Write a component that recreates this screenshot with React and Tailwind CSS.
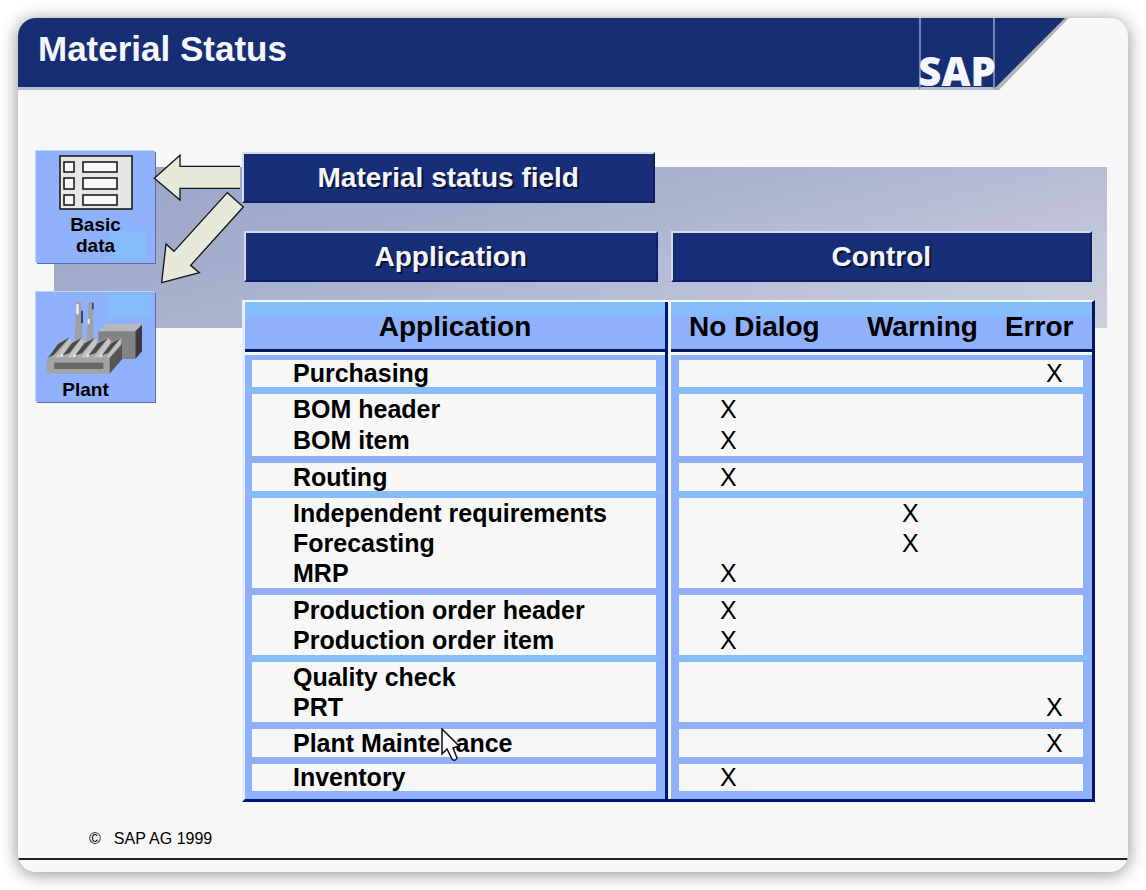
import React from 'react';

const groups = [
  { line: 'leading-[27px]', items: [{ name: 'Purchasing', mark: 'error' }] },
  {
    line: 'leading-[31px]',
    stripe: true,
    items: [{ name: 'BOM header', mark: 'noDialog' }, { name: 'BOM item', mark: 'noDialog' }],
  },
  { line: 'leading-[28px]', items: [{ name: 'Routing', mark: 'noDialog' }] },
  {
    line: 'leading-[30px]',
    stripe: true,
    items: [
      { name: 'Independent requirements', mark: 'warning' },
      { name: 'Forecasting', mark: 'warning' },
      { name: 'MRP', mark: 'noDialog' },
    ],
  },
  {
    line: 'leading-[30px]',
    items: [
      { name: 'Production order header', mark: 'noDialog' },
      { name: 'Production order item', mark: 'noDialog' },
    ],
  },
  { line: 'leading-[30px]', stripe: true, items: [{ name: 'Quality check', mark: null }, { name: 'PRT', mark: 'error' }] },
  { line: 'leading-[28px]', items: [{ name: 'Plant Maintenance', mark: 'error', pointer: true }] },
  { line: 'leading-[27px]', items: [{ name: 'Inventory', mark: 'noDialog' }] },
];

const headCell =
  'p-0 h-[53px] pb-1 text-[28px] leading-8 font-bold whitespace-nowrap bg-[linear-gradient(to_top,#eef6fd_3px,#06165c_3px,#06165c_6px,#8fb0fb_6px,#8fb0fb_calc(100%-14px),#84bdf9_calc(100%-14px))]';

const SlideHeader = () => (
  <header className="flex h-[72px]">
    <div className="flex flex-1 items-start bg-[#182e72] border-b-3 border-[#b9bfd3] pl-5 pt-3">
      <h1 className="text-[35px] leading-[38px] font-bold text-[#f4f6fc] whitespace-nowrap">Material Status</h1>
    </div>
    <div className="flex w-[76px] items-end justify-center bg-[#182e72] border-x-2 border-x-[#7482b6] border-b-3 border-b-[#b9bfd3]">
      <span className="h-[34px] font-['Open_Sans',sans-serif] text-[40px] leading-9 font-extrabold text-[#f4f6fc]">SAP</span>
    </div>
    <svg className="mr-[59px] h-[72px] w-[74px] shrink-0" viewBox="0 0 74 72" aria-hidden="true">
      <path d="M0 72 L4 72 L74 0 H60 L0 66 Z" fill="#b4b5b9" />
      <path d="M0 0 H70 L1 69 H0 Z" fill="#182e72" />
    </svg>
  </header>
);

const BasicDataTile = () => (
  <div className="flex h-[112px] flex-col items-center bg-[#8fb0fb] bg-[linear-gradient(#84bdf9,#84bdf9)] bg-[length:36px_28px] bg-[position:74px_80px] bg-no-repeat pt-1 shadow-[1px_1px_0_#5d6f9f,-1px_-1px_0_#b8d4fb]">
    <svg className="h-[55px] w-[74px]" viewBox="0 0 74 55" stroke="#111" strokeWidth="1.5" aria-hidden="true">
      <rect x="1" y="1" width="72" height="53" fill="#e6e6e6" />
      <g fill="#f8f8f8">
        <rect x="5" y="7" width="10" height="10" />
        <rect x="24" y="7" width="34" height="10" />
        <rect x="5" y="23" width="10" height="11" />
        <rect x="24" y="23" width="34" height="11" />
        <rect x="5" y="40" width="10" height="10" />
        <rect x="24" y="40" width="34" height="10" />
      </g>
    </svg>
    <p className="mt-1 text-center text-[19px] leading-[21px] font-bold">
      Basic
      <br />
      data
    </p>
  </div>
);

const PlantTile = () => (
  <div className="flex h-[110px] flex-col items-center bg-[#8fb0fb] bg-[linear-gradient(#84bdf9,#84bdf9)] bg-[length:44px_24px] bg-[position:71px_2px] bg-no-repeat pt-2 pr-1 shadow-[1px_1px_0_#5d6f9f,-1px_-1px_0_#b8d4fb]">
    <svg className="h-[75px] w-[100px]" viewBox="70 90 300 225" aria-hidden="true">
      {/* block behind */}
      <path d="M233 184 L257 162 H364 L344 184 Z" fill="#b9b9b9" />
      <path d="M233 184 H344 V267 H233 Z" fill="#838383" />
      <path d="M344 184 L364 164 V244 L344 267 Z" fill="#3c3c3f" />
      {/* chimneys */}
      <path d="M166 96 H181 L186 215 H162 Z" fill="#a0a0a4" />
      <path d="M204 96 H218 V215 H198 Z" fill="#a0a0a4" />
      <path d="M167 103 h7 v30 h-7z M201 147 h6 v14 h-6z" fill="#f2f2f2" />
      <path d="M181 122 h6 v38 h-6z M214 98 h5 v20 h-5z" fill="#35407a" />
      {/* saw-tooth roof */}
      <path d="M84 264 L146 202 L152 218 L182 204 L190 218 L222 204 L230 218 L262 202 L270 218 L302 202 V264 Z" fill="#a9a9a9" />
      <path d="M104 262 L147 204 L152 214 L124 262 Z M142 262 L182 206 L192 212 L162 262 Z M182 262 L222 206 L232 212 L202 262 Z M222 262 L262 206 L272 212 L242 262 Z M258 262 L300 206 V222 L266 262 Z" fill="#c4c4c4" />
      <path d="M82 264 L112 222 L147 202 L100 254 Z M126 256 L154 220 L182 204 L146 250 Z M164 256 L192 220 L222 204 L184 250 Z M204 256 L232 220 L262 204 L224 250 Z M244 256 L272 220 L300 204 L262 250 Z" fill="#4a4a4e" />
      <path d="M120 262 l3 -12 l5 8z M158 262 l3 -12 l5 8z M198 262 l3 -12 l5 8z M238 262 l3 -12 l5 8z" fill="#f2f2f2" />
      {/* front */}
      <path d="M78 264 H267 V311 H78 Z" fill="#a3a3a3" />
      <path d="M267 264 L304 222 V268 L267 311 Z" fill="#555558" />
      <rect x="101" y="278" width="147" height="19" fill="#686868" />
    </svg>
    <p className="mt-1 mr-4 text-[19px] leading-[21px] font-bold">Plant</p>
  </div>
);

const Arrows = () => (
  <svg
    className="relative h-[132px] w-[87px] shrink-0 overflow-visible"
    viewBox="405 33 261 396"
    fill="#e8e9d8"
    stroke="#15151a"
    strokeWidth="4"
    aria-hidden="true"
  >
    <path d="M660 79 H480 V46 L403 115 L480 180 V145 H660" />
    <path d="M425 428 L438 312 L462 334 L622 158 L670 201 L512 376 L538 398 Z" />
  </svg>
);

const Bar = ({ className, children }) => (
  <h2
    className={`border-2 border-t-[#d5dbea] border-l-[#d5dbea] border-r-[#0f2062] border-b-[#0f2062] bg-[#182e78] text-center text-[28px] leading-[47px] font-bold text-[#f4f6fc] [text-shadow:2px_2px_0_#0c1230] ${className}`}
  >
    {children}
  </h2>
);

const Pointer = () => (
  <svg className="absolute -top-px left-[189px] z-10 h-[34px] w-[20px]" viewBox="0 0 20 34" aria-hidden="true">
    <path
      d="M1 1 V26 L6 21 L11 31 Q14 34 16 30 L12 20 L18 18 Z"
      fill="#f7f7f7"
      stroke="#111"
      strokeWidth="1.5"
    />
  </svg>
);

const StatusTable = () => (
  <div className="border-t-2 border-l-3 border-r-3 border-b-3 border-t-[#eef6fd] border-l-[#e4f0fd] border-r-[#06165c] border-b-[#00147c]">
    <table className="w-full table-fixed border-separate border-spacing-0 text-left text-[25px] text-black">
      <colgroup>
        <col />
        <col className="w-[6px]" />
        <col className="w-[21%]" />
        <col className="w-[17%]" />
        <col className="w-[11.7%]" />
      </colgroup>
      <thead>
        <tr>
          <th scope="col" className={`${headCell} text-center`}>Application</th>
          <td className="border-l-3 border-[#00147c] bg-[#eef6fd] p-0" />
          <th scope="col" className={`${headCell} pl-[18px]`}>No Dialog</th>
          <th scope="col" className={`${headCell} pl-[18px]`}>Warning</th>
          <th scope="col" className={`${headCell} pl-3`}>Error</th>
        </tr>
      </thead>
      {groups.map((group, g) => (
        <tbody key={group.items[0].name}>
          {group.items.map((item, i) => {
            const stripe = group.stripe ? 'border-t-[#86bdf7]' : 'border-t-[#93aff3]';
            const top = i > 0 ? 'border-t-0' : g === 0 ? 'border-t-5' : 'border-t-7';
            const bottom = g === groups.length - 1 ? 'border-b-8' : 'border-b-0';
            const cell = `bg-[#f7f7f7] p-0 border-[#8fb0fb] ${group.line} ${stripe} ${top} ${bottom}`;
            return (
              <tr key={item.name}>
                <th scope="row" className={`${cell} relative border-l-7 border-r-9 pl-[41px] font-bold whitespace-nowrap`}>
                  {item.name}
                  {item.pointer && <Pointer />}
                </th>
                <td className="border-l-3 border-[#00147c] bg-[#eef6fd] p-0" />
                <td className={`${cell} border-l-8 pl-[41px]`}>{item.mark === 'noDialog' && 'X'}</td>
                <td className={`${cell} pl-[53px]`}>{item.mark === 'warning' && 'X'}</td>
                <td className={`${cell} border-r-9 pl-[53px]`}>{item.mark === 'error' && 'X'}</td>
              </tr>
            );
          })}
        </tbody>
      ))}
    </table>
  </div>
);

const App = () => {
  return (
    <div className="bg-white p-[18px] font-['Liberation_Sans',Arial,sans-serif] text-black">
      <div className="overflow-hidden rounded-[18px] bg-[#f7f7f7] shadow-[0_2px_18px_rgba(0,0,0,0.45)]">
        <SlideHeader />

        <main className="grid">
          {/* Shaded band behind the tiles and bars */}
          <div className="col-start-1 row-start-1 mt-[77px] mr-[21px] ml-9 h-[161px] bg-[linear-gradient(165deg,#98a5ca_0%,#a3adcb_30%,#b1b9d3_55%,#bdbfd8_70%,#c3cada_85%,#d0cfdc_100%)]" />

          <div className="col-start-1 row-start-1 flex items-start pt-[61px] pr-[33px] pl-[18px]">
            <div className="flex w-[119px] shrink-0 flex-col gap-[29px]">
              <BasicDataTile />
              <PlantTile />
            </div>
            <Arrows />
            <div className="min-w-0 flex-1 pt-px">
              <div className="grid grid-cols-2">
                <Bar className="mr-[14px]">Material status field</Bar>
              </div>
              <div className="mt-7 grid grid-cols-2">
                <Bar className="mr-[11px] ml-[2px]">Application</Bar>
                <Bar className="mr-[3px] ml-[2px]">Control</Bar>
              </div>
              <div className="mt-[18px]">
                <StatusTable />
              </div>
            </div>
          </div>
        </main>

        <footer className="mt-[27px] mb-3">
          <p className="border-b-2 border-[#222] pb-[9px] pl-[71px] text-[16px] leading-5">
            <span className="mr-[13px]">©</span>
            SAP AG 1999
          </p>
        </footer>
      </div>
    </div>
  );
};

export default App;
